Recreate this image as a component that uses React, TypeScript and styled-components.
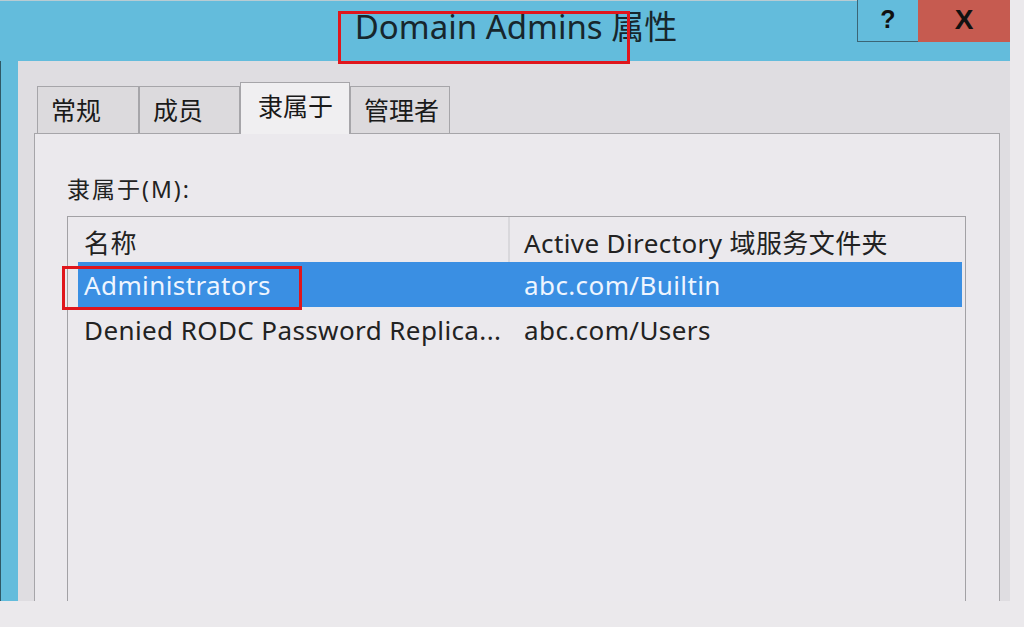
import React from "react";
import styled, { createGlobalStyle } from "styled-components";

const Global = createGlobalStyle`
  html, body { margin: 0; padding: 0; background: #ebe9ec; }
  * { box-sizing: border-box; }
`;

const Page = styled.div`
  position: relative;
  width: 1024px;
  height: 627px;
  overflow: hidden;
  background: #ebe9ec;
  font-family: "Noto Sans", "Noto Sans CJK SC", sans-serif;
  color: #1d1d1f;
`;

const Window = styled.div`
  width: 1010px;
  height: 601px;
  display: flex;
  flex-direction: column;
  overflow: hidden;
`;

const TitleBar = styled.div`
  height: 61px;
  flex: none;
  background: #63bcdc;
  border-top: 1px solid #b8ccd3;
  display: grid;
  grid-template-columns: 1fr auto 1fr;
`;

const Title = styled.div`
  grid-column: 2;
  align-self: start;
  margin-top: 6px;
  padding-left: 22px;
  font-size: 33px;
  line-height: 40px;
  color: #17262c;
  white-space: nowrap;
`;

const Controls = styled.div`
  grid-column: 3;
  justify-self: end;
  align-self: start;
  display: flex;
  margin-top: -1px;
`;

const CaptionButton = styled.div<{ $close?: boolean }>`
  width: ${(p) => (p.$close ? 92 : 61)}px;
  height: 42px;
  display: flex;
  align-items: center;
  justify-content: center;
  padding-bottom: 3px;
  background: ${(p) => (p.$close ? "#c65b50" : "#63bcdc")};
  border-left: ${(p) => (p.$close ? "none" : "1px solid #3b6575")};
  border-bottom: ${(p) => (p.$close ? "none" : "1px solid #3b6575")};
  font-family: "Liberation Sans", Arial, sans-serif;
  font-weight: bold;
  font-size: ${(p) => (p.$close ? 28 : 25)}px;
  color: #111;
`;

const Body = styled.div`
  flex: 1;
  min-height: 0;
  display: flex;
`;

const BlueEdge = styled.div`
  width: 18px;
  flex: none;
  background: #63bcdc;
  border-left: 1px solid #2f5866;
`;

const Client = styled.div`
  flex: 1;
  background: #dfdde1;
  padding: 21px 10px 0 16px;
  display: flex;
  flex-direction: column;
`;

const TabStrip = styled.div`
  height: 52px;
  flex: none;
  display: flex;
  align-items: flex-end;
  padding-left: 3px;
  margin-bottom: -1px;
  position: relative;
  z-index: 1;
`;

const Tab = styled.div<{ $active?: boolean; $w: number }>`
  width: ${(p) => p.$w}px;
  height: ${(p) => (p.$active ? 52 : 47)}px;
  margin-bottom: ${(p) => (p.$active ? 0 : 1)}px;
  display: flex;
  align-items: center;
  padding-left: ${(p) => (p.$active ? 17 : 13)}px;
  padding-bottom: ${(p) => (p.$active ? 6 : 0)}px;
  border: 1px solid #a6a5a9;
  border-bottom: none;
  background: ${(p) => (p.$active ? "#f0eff1" : "#dcdadd")};
  font-size: 25px;
  line-height: 30px;
  color: #1a1a1a;
  white-space: nowrap;
`;

const Panel = styled.div`
  flex: 1;
  background: #ebe9ed;
  border: 1px solid #a6a5a9;
  padding: 40px 33px 0 32px;
  display: flex;
  flex-direction: column;
`;

const Label = styled.div`
  font-size: 23px;
  line-height: 30px;
  letter-spacing: 2px;
  margin-bottom: 12px;
  color: #222;
`;

const ListBox = styled.div`
  flex: 1;
  min-height: 500px;
  border: 1px solid #a2a1a5;
  background: #ebe9ed;
`;

const HeaderRow = styled.div`
  display: grid;
  grid-template-columns: 432px 1fr;
  height: 45px;
  margin-left: 10px;
`;

const HeaderCell = styled.div<{ $first?: boolean }>`
  display: flex;
  align-items: center;
  padding-left: ${(p) => (p.$first ? 6 : 14)}px;
  padding-top: 4px;
  font-size: 26px;
  letter-spacing: 0.4px;
  color: #222;
  white-space: nowrap;
  border-right: ${(p) => (p.$first ? "2px solid #d9d8dc" : "none")};
`;

const Row = styled.div<{ $selected?: boolean }>`
  display: grid;
  grid-template-columns: 432px 1fr;
  height: 45px;
  margin: 0 3px 0 10px;
  background: ${(p) => (p.$selected ? "#3a8fe3" : "transparent")};
  color: ${(p) => (p.$selected ? "#eef5ff" : "#222")};
`;

const Cell = styled.div<{ $first?: boolean }>`
  display: flex;
  align-items: center;
  padding-left: ${(p) => (p.$first ? 6 : 14)}px;
  font-size: 26px;
  letter-spacing: 0.4px;
  white-space: nowrap;
  overflow: hidden;
`;

const Annotation = styled.div<{ $x: number; $y: number; $w: number; $h: number }>`
  position: absolute;
  left: ${(p) => p.$x}px;
  top: ${(p) => p.$y}px;
  width: ${(p) => p.$w}px;
  height: ${(p) => p.$h}px;
  border: 3px solid #e0161c;
  pointer-events: none;
`;

const tabs = [
  { label: "常规", w: 102 },
  { label: "成员", w: 101 },
  { label: "隶属于", w: 110, active: true },
  { label: "管理者", w: 100 },
];

const rows = [
  { name: "Administrators", folder: "abc.com/Builtin", selected: true },
  { name: "Denied RODC Password Replica...", folder: "abc.com/Users" },
];

export default function App() {
  return (
    <>
      <Global />
      <Page>
        <Window>
          <TitleBar>
            <Title>Domain Admins 属性</Title>
            <Controls>
              <CaptionButton>?</CaptionButton>
              <CaptionButton $close>X</CaptionButton>
            </Controls>
          </TitleBar>
          <Body>
            <BlueEdge />
            <Client>
              <TabStrip>
                {tabs.map((t) => (
                  <Tab key={t.label} $w={t.w} $active={t.active}>
                    {t.label}
                  </Tab>
                ))}
              </TabStrip>
              <Panel>
                <Label>隶属于(M):</Label>
                <ListBox>
                  <HeaderRow>
                    <HeaderCell $first>名称</HeaderCell>
                    <HeaderCell>Active Directory 域服务文件夹</HeaderCell>
                  </HeaderRow>
                  {rows.map((r) => (
                    <Row key={r.name} $selected={r.selected}>
                      <Cell $first>{r.name}</Cell>
                      <Cell>{r.folder}</Cell>
                    </Row>
                  ))}
                </ListBox>
              </Panel>
            </Client>
          </Body>
        </Window>
        <Annotation $x={338} $y={11} $w={292} $h={53} />
        <Annotation $x={62} $y={266} $w={240} $h={44} />
      </Page>
    </>
  );
}
